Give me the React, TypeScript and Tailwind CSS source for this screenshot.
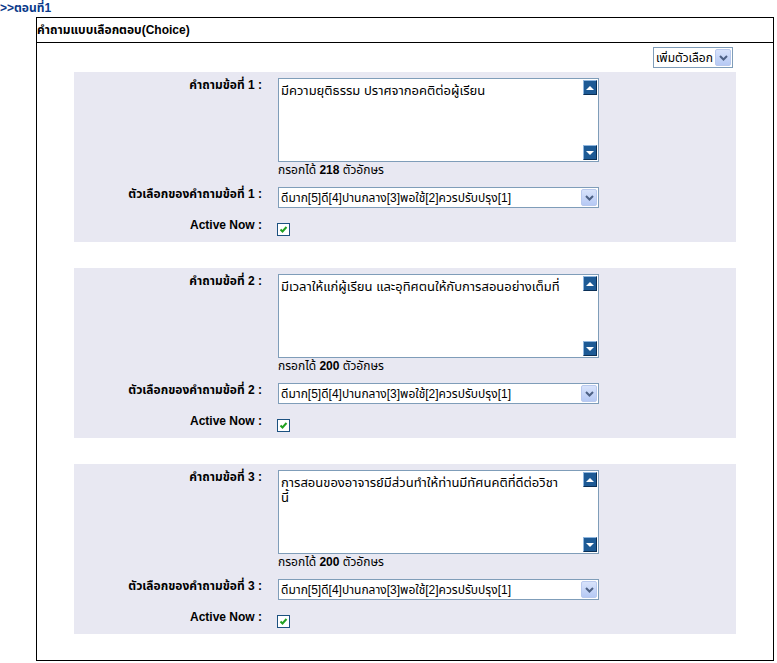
import React from 'react';

const questions = [
  { no: 1, text: ['มีความยุติธรรม ปราศจากอคติต่อผู้เรียน'], left: 218 },
  { no: 2, text: ['มีเวลาให้แก่ผู้เรียน และอุทิศตนให้กับการสอนอย่างเต็มที่'], left: 200 },
  { no: 3, text: ['การสอนของอาจารย์มีส่วนทำให้ท่านมีทัศนคติที่ดีต่อวิชา', 'นี้'], left: 200 },
];

const choiceText = 'ดีมาก[5]ดี[4]ปานกลาง[3]พอใช้[2]ควรปรับปรุง[1]';

function ScrollBtn({ up }: { up?: boolean }) {
  return (
    <div className="w-[14px] h-[15px] bg-[#1d5a95] border border-t-[#8fb6de] border-l-[#8fb6de] border-r-[#0b2f55] border-b-[#0b2f55] flex items-center justify-center">
      <svg width="8" height="6" viewBox="0 0 8 6">
        {up ? <path d="M0 5 L4 1 L8 5 Z" fill="#fff" /> : <path d="M0 1 L8 1 L4 5 Z" fill="#fff" />}
      </svg>
    </div>
  );
}

function SelectArrow() {
  return (
    <div className="w-[16px] h-[17px] rounded-[2px] bg-gradient-to-b from-[#d8e3fb] to-[#b6c9f4] border border-[#b9c9ee] flex items-center justify-center">
      <svg width="9" height="6" viewBox="0 0 9 6">
        <path d="M1 1 L4.5 4.5 L8 1" stroke="#4d6185" strokeWidth="2" fill="none" />
      </svg>
    </div>
  );
}

function Checkbox() {
  return (
    <div className="w-[13px] h-[13px] border border-[#1c5180] bg-white flex items-center justify-center">
      <svg width="9" height="9" viewBox="0 0 9 9">
        <path d="M1.5 4.5 L3.5 6.5 L7.5 2" stroke="#21a121" strokeWidth="2" fill="none" />
      </svg>
    </div>
  );
}

function QuestionPanel({ no, text, left }: { no: number; text: string[]; left: number }) {
  return (
    <div className="h-[170px] bg-[#e8e8f2] pt-[6px] grid grid-cols-[188px_321px] gap-x-[16px] content-start">
      <div className="text-right font-bold text-[12px] leading-[14px]">คำถามข้อที่ {no} :</div>
      <div>
        <div className="h-[84px] border border-[#7f9db9] bg-white flex justify-between pl-[2px] pr-[1px] py-[1px]">
          <div className="text-[13px] leading-[15px] pt-[3px] whitespace-nowrap">
            {text.map((t, i) => (
              <div key={i}>{t}</div>
            ))}
          </div>
          <div className="flex flex-col justify-between shrink-0">
            <ScrollBtn up />
            <ScrollBtn />
          </div>
        </div>
        <div className="text-[12px] leading-[14px] pt-[1px]">
          กรอกได้ <span className="font-bold">{left}</span> ตัวอักษร
        </div>
      </div>

      <div className="text-right font-bold text-[12px] leading-[14px] self-start mt-[10px]">ตัวเลือกของคำถามข้อที่ {no} :</div>
      <div className="mt-[10px] h-[21px] border border-[#7f9db9] bg-white flex items-center justify-between pl-[2px] pr-[1px]">
        <span className="text-[12px] leading-[14px]">{choiceText}</span>
        <SelectArrow />
      </div>

      <div className="text-right font-bold text-[12px] leading-[14px] self-start mt-[10px]">Active Now :</div>
      <div className="mt-[15px] h-[13px] -ml-[1px]">
        <Checkbox />
      </div>
    </div>
  );
}

export default function App() {
  return (
    <div className="w-[777px] h-[663px] bg-white overflow-hidden text-black font-['Liberation_Sans','Noto_Sans_Thai','Noto_Sans',sans-serif]">
      <div className="text-[#0a3a8a] font-bold text-[12px] leading-[14px] pt-[1px] h-[17px]">&gt;&gt;ตอนที่1</div>

      <div className="ml-[36px] w-[738px] h-[644px] border border-black">
        <div className="h-[25px] border-b border-black flex items-center font-bold text-[12px]">
          คำถามแบบเลือกตอบ(Choice)
        </div>

        <div className="mt-[4px] flex justify-end pr-[40px]">
          <div className="w-[80px] h-[21px] border border-[#7f9db9] bg-white flex items-center justify-between pl-[2px] pr-[1px]">
            <span className="text-[12px] leading-[14px]">เพิ่มตัวเลือก</span>
            <SelectArrow />
          </div>
        </div>

        <div className="mt-[4px] mx-[37px] flex flex-col gap-[26px]">
          {questions.map(q => (
            <QuestionPanel key={q.no} {...q} />
          ))}
        </div>
      </div>
    </div>
  );
}
